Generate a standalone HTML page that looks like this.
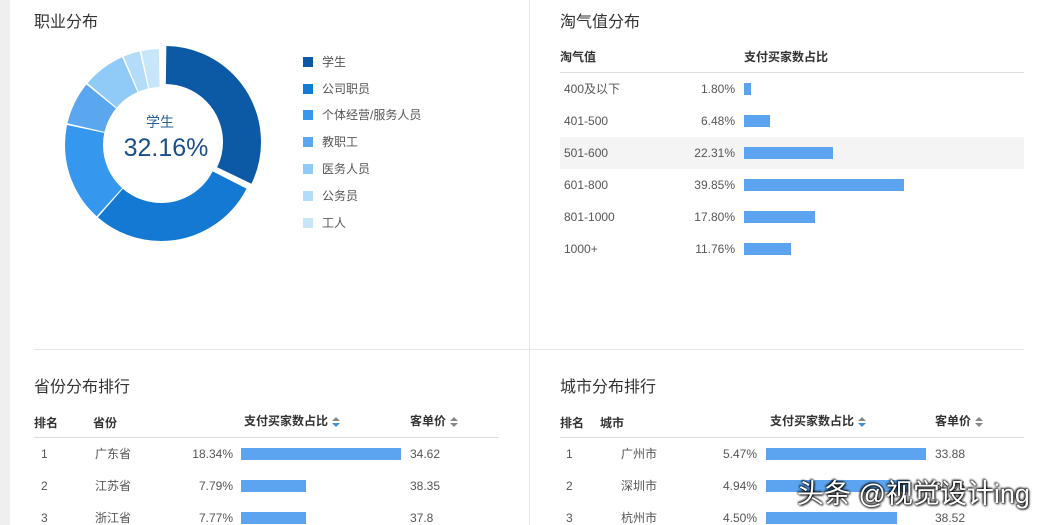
<!DOCTYPE html>
<html><head><meta charset="utf-8"><style>
*{margin:0;padding:0;box-sizing:border-box}
body{width:1044px;height:525px;overflow:hidden;background:#fff;position:relative;font-family:"Liberation Sans","Noto Sans CJK SC",sans-serif;color:#555;font-size:12px}
.a{position:absolute;white-space:nowrap;line-height:1}
.t{font-size:16px;color:#333}
.h{font-weight:bold;color:#333;font-size:12px}
.bar{position:absolute;height:12px;background:#5ca4ef}
.r{text-align:right}
.sort{display:inline-block;vertical-align:middle;margin-left:4px;width:8px;height:10px;position:relative}
.sort:before{content:"";position:absolute;left:0;top:0;border:4px solid transparent;border-top:0;border-bottom:4px solid #888}
.sort:after{content:"";position:absolute;left:0;top:6px;border:4px solid transparent;border-bottom:0;border-top:4px solid #888}
.sort.b:after{border-top-color:#3d8fd6}
.ln{position:absolute;height:1px;background:#ddd}
.lg{position:absolute;width:10px;height:10px;left:303px}
</style></head><body>
<div style="position:absolute;left:0;top:0;width:10px;height:525px;background:#f0eff0"></div>
<div style="position:absolute;left:529px;top:0;width:1px;height:525px;background:#e6e6e6"></div>
<div class="ln" style="left:34px;top:349px;width:990px;background:#e6e6e6"></div>

<div class="a t" style="left:34px;top:15px">职业分布</div>
<svg style="position:absolute;left:0;top:0" width="300" height="260">
<g transform="rotate(-90 161 145)" fill="none" stroke-width="38">
<circle cx="164" cy="149" r="77" stroke="#0c5aa6" stroke-dasharray="154.5 400" stroke-dashoffset="-1.1"/>
<circle cx="161" cy="145" r="77" stroke="#1479d3" stroke-dasharray="139.8 400" stroke-dashoffset="-157.2"/>
<circle cx="161" cy="145" r="77" stroke="#3597ee" stroke-dasharray="80.6 400" stroke-dashoffset="-298.3"/>
<circle cx="161" cy="145" r="77" stroke="#5aa7f0" stroke-dasharray="34.9 500" stroke-dashoffset="-380.3"/>
<circle cx="161" cy="145" r="77" stroke="#90cbf7" stroke-dasharray="34.9 500" stroke-dashoffset="-416.6"/>
<circle cx="161" cy="145" r="77" stroke="#b3dcf8" stroke-dasharray="13.4 500" stroke-dashoffset="-452.9"/>
<circle cx="161" cy="145" r="77" stroke="#c7e6fa" stroke-dasharray="14.1 500" stroke-dashoffset="-467.7"/>
</g>
</svg>
<div class="a" style="left:120px;top:115px;width:80px;text-align:center;font-size:14px;color:#2a5f94">学生</div>
<div class="a" style="left:101px;top:136px;width:130px;text-align:center;font-size:25px;color:#1b4f8a">32.16%</div>

<div class="lg" style="top:57px;background:#0c5aa6"></div><div class="a" style="left:322px;top:56px">学生</div>
<div class="lg" style="top:84px;background:#1479d3"></div><div class="a" style="left:322px;top:83px">公司职员</div>
<div class="lg" style="top:110px;background:#3597ee"></div><div class="a" style="left:322px;top:109px">个体经营/服务人员</div>
<div class="lg" style="top:137px;background:#5aa7f0"></div><div class="a" style="left:322px;top:136px">教职工</div>
<div class="lg" style="top:164px;background:#90cbf7"></div><div class="a" style="left:322px;top:163px">医务人员</div>
<div class="lg" style="top:191px;background:#b3dcf8"></div><div class="a" style="left:322px;top:190px">公务员</div>
<div class="lg" style="top:218px;background:#c7e6fa"></div><div class="a" style="left:322px;top:217px">工人</div>

<div class="a t" style="left:560px;top:15px">淘气值分布</div>
<div class="a h" style="left:560px;top:51px">淘气值</div>
<div class="a h" style="left:744px;top:51px">支付买家数占比</div>
<div class="ln" style="left:560px;top:72px;width:464px"></div>
<div style="position:absolute;left:560px;top:137px;width:464px;height:32px;background:#f4f4f4"></div>
<div class="a" style="left:564px;top:83px">400及以下</div><div class="a r" style="left:655px;width:80px;top:83px">1.80%</div><div class="bar" style="left:744px;top:83px;width:7px"></div>
<div class="a" style="left:564px;top:115px">401-500</div><div class="a r" style="left:655px;width:80px;top:115px">6.48%</div><div class="bar" style="left:744px;top:115px;width:26px"></div>
<div class="a" style="left:564px;top:147px">501-600</div><div class="a r" style="left:655px;width:80px;top:147px">22.31%</div><div class="bar" style="left:744px;top:147px;width:89px"></div>
<div class="a" style="left:564px;top:179px">601-800</div><div class="a r" style="left:655px;width:80px;top:179px">39.85%</div><div class="bar" style="left:744px;top:179px;width:160px"></div>
<div class="a" style="left:564px;top:211px">801-1000</div><div class="a r" style="left:655px;width:80px;top:211px">17.80%</div><div class="bar" style="left:744px;top:211px;width:71px"></div>
<div class="a" style="left:564px;top:243px">1000+</div><div class="a r" style="left:655px;width:80px;top:243px">11.76%</div><div class="bar" style="left:744px;top:243px;width:47px"></div>

<div class="a t" style="left:34px;top:380px">省份分布排行</div>
<div class="a h" style="left:34px;top:417px">排名</div>
<div class="a h" style="left:93px;top:417px">省份</div>
<div class="a h" style="left:244px;top:415px">支付买家数占比<span class="sort b"></span></div>
<div class="a h" style="left:410px;top:415px">客单价<span class="sort"></span></div>
<div class="ln" style="left:34px;top:437px;width:465px"></div>
<div class="a" style="left:41px;top:448px">1</div><div class="a" style="left:95px;top:448px">广东省</div><div class="a r" style="left:153px;width:80px;top:448px">18.34%</div><div class="bar" style="left:241px;top:448px;width:160px"></div><div class="a" style="left:410px;top:448px">34.62</div>
<div class="a" style="left:41px;top:480px">2</div><div class="a" style="left:95px;top:480px">江苏省</div><div class="a r" style="left:153px;width:80px;top:480px">7.79%</div><div class="bar" style="left:241px;top:480px;width:65px"></div><div class="a" style="left:410px;top:480px">38.35</div>
<div class="a" style="left:41px;top:512px">3</div><div class="a" style="left:95px;top:512px">浙江省</div><div class="a r" style="left:153px;width:80px;top:512px">7.77%</div><div class="bar" style="left:241px;top:512px;width:65px"></div><div class="a" style="left:410px;top:512px">37.8</div>

<div class="a t" style="left:560px;top:380px">城市分布排行</div>
<div class="a h" style="left:560px;top:417px">排名</div>
<div class="a h" style="left:600px;top:417px">城市</div>
<div class="a h" style="left:770px;top:415px">支付买家数占比<span class="sort b"></span></div>
<div class="a h" style="left:935px;top:415px">客单价<span class="sort"></span></div>
<div class="ln" style="left:560px;top:437px;width:464px"></div>
<div class="a" style="left:566px;top:448px">1</div><div class="a" style="left:621px;top:448px">广州市</div><div class="a r" style="left:677px;width:80px;top:448px">5.47%</div><div class="bar" style="left:766px;top:448px;width:160px"></div><div class="a" style="left:935px;top:448px">33.88</div>
<div class="a" style="left:566px;top:480px">2</div><div class="a" style="left:621px;top:480px">深圳市</div><div class="a r" style="left:677px;width:80px;top:480px">4.94%</div><div class="bar" style="left:766px;top:480px;width:144px"></div><div class="a" style="left:935px;top:480px">36.95</div>
<div class="a" style="left:566px;top:512px">3</div><div class="a" style="left:621px;top:512px">杭州市</div><div class="a r" style="left:677px;width:80px;top:512px">4.50%</div><div class="bar" style="left:766px;top:512px;width:131px"></div><div class="a" style="left:935px;top:512px">38.52</div>

<div class="a" style="left:797px;top:481px;font-size:27px;color:#fff;text-shadow:0 0 2px #000,1px 1px 2px #000,-1px -1px 2px #000">头条 @视觉设计ing</div>
</body></html>
